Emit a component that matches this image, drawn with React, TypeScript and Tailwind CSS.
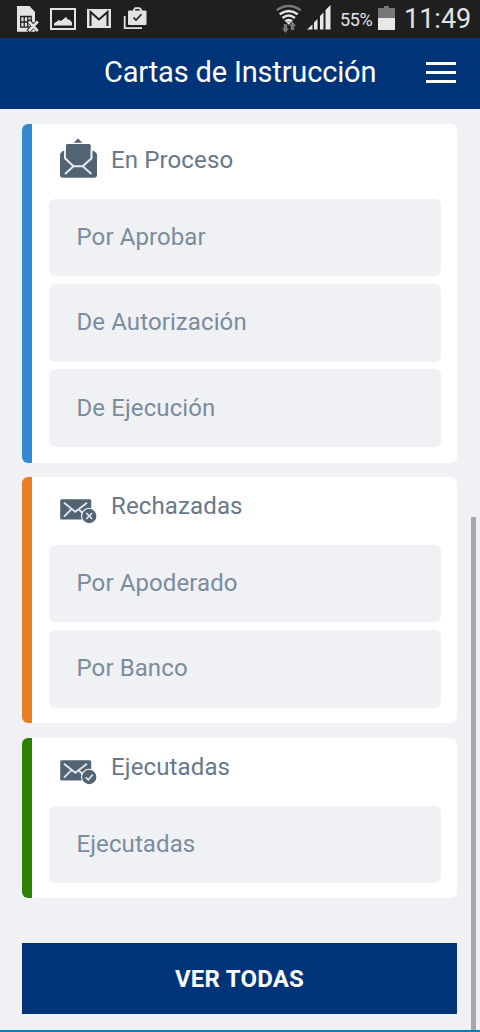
import type { ReactNode } from "react";

function OpenMailIcon() {
  return (
    <svg className="block h-10 w-[38px]" viewBox="0 0 38 40">
      <path d="M13.600 4.800 18 .6l4.400 4.200z" fill="#526374" />
      <path d="M0 17q0-3 4.500-4.500v8L13 28.300h10l9-7.800v-8q5 1.500 5 4.500v19.700q0 3-3 3H3q-3 0-3-3z" fill="#526374" />
      <path d="M6 7.500Q6 6 7.500 6h21.700q1.500 0 1.500 1.500V20L22.500 28h-9L6 20z" fill="#526374" />
      <path d="M5 12v8.300l8.500 8h9.200l8.900-8V12M13.500 28.300 5 36M22.700 28.300 31.500 36" fill="none" stroke="#e8ecef" strokeWidth="1.900" />
    </svg>
  );
}

function MailIcon({ mark }: { mark: "cross" | "check" }) {
  return (
    <svg className="block h-[26px] w-[38px]" viewBox="0 0 38 26">
      <rect x=".2" y=".3" width="31" height="20.300" rx="1.500" fill="#526374" />
      <path d="M4 3.700 15.300 12.800 27 3.700M4 17.700l7.500-7.500M18.500 10.300l5.500 5" fill="none" stroke="#e1e6ea" strokeWidth="1.900" />
      <circle cx="29.200" cy="17" r="8.200" fill="#fff" />
      <circle cx="29.200" cy="17" r="7.200" fill="#526374" />
      <path
        d={mark === "cross" ? "m26.300 14 5.800 6m0-6-5.800 6" : "m25.800 17.300 2.500 2.500 4.500-5.300"}
        fill="none"
        stroke="#e1e6ea"
        strokeWidth="1.700"
      />
    </svg>
  );
}

function StatusBar() {
  return (
    <div className="flex h-[38px] shrink-0 items-start bg-[#1f1f1f] text-[#e3e3e3]">
      <svg className="block h-[38px] w-[160px]" viewBox="0 0 160 38">
        <path d="M17 6h12.500l5.500 6v19.700H17z" fill="#e3e3e3" />
        <path d="M20.700 16.500h10.500v10.700H20.700zM20.500 22h11M24.200 16.500v11M27.800 16.500v11" fill="none" stroke="#1f1f1f" strokeWidth="1.300" />
        <path d="m28 20.500 11 11m0-11-11 11" stroke="#1f1f1f" strokeWidth="4.500" />
        <path d="m28.800 21.500 9 9.500m0-9.500-9 9.500" stroke="#e3e3e3" strokeWidth="2.600" />
        <rect x="51" y="9" width="24" height="20" fill="none" stroke="#e3e3e3" strokeWidth="2" />
        <path d="M54 25.500v-2l5-3.500 2 1 5-4 2.500 3 1-.5 2.500 3v3z" fill="#e3e3e3" />
        <rect x="87" y="9" width="24" height="19" fill="#e3e3e3" />
        <path d="M90.500 26V12L99 19.500l8.500-7.500v14" fill="none" stroke="#1f1f1f" strokeWidth="2" />
        <path d="M124.700 16v12.200H142" fill="none" stroke="#e3e3e3" strokeWidth="1.800" />
        <rect x="128" y="10.500" width="18.500" height="14.500" rx="1" fill="#e3e3e3" />
        <path d="M134 11V9.500l1.300-1.300h4L141 9.500V11" fill="none" stroke="#e3e3e3" strokeWidth="1.800" />
        <path d="m133.500 17.500 2.500 2.600 5.500-5.800" fill="none" stroke="#1f1f1f" strokeWidth="1.600" />
      </svg>
      <svg className="ml-[114px] block h-[38px] w-[60px]" viewBox="0 0 60 38">
        <g fill="none" strokeWidth="2.400">
          <path d="M2.700 10.200q12-8.400 24 0" stroke="#777" />
          <path d="M5.700 14.300q9-6.800 18 0M8.500 18q6.200-5 12.400 0" stroke="#e8e8e8" />
          <path d="M11.300 21.300q3.400-2.800 6.800 0" stroke="#e8e8e8" />
        </g>
        <path d="M12.300 22.300q2.400-1.600 4.800 0l-2.400 2.400z" fill="#e8e8e8" />
        <path d="M9.800 24h3.400v4.500H15l-3.500 4.400L8 28.500h1.800zM16.800 30v-4H15l3.500-4.400L22 26h-1.800v4z" fill="#777" />
        <path d="m33 29.500 5.500-5v5zM40 29.500v-7l3.500-3.500v10.500zM46 29.500V16l3.500-3.500v17zM51.500 29.500V10l5-5v24.500z" fill="#e8e8e8" />
      </svg>
      <span className="ml-[6px] mt-[8px] w-[38px] text-[18px] leading-6 tracking-[-0.4px]">55%</span>
      <svg className="block h-[38px] w-[18px]" viewBox="0 0 18 38">
        <path d="M0 8h6V6h5v2h6v10H0z" fill="#777" />
        <path d="M0 18h17v12H0z" fill="#e8e8e8" />
      </svg>
      <span className="ml-[8px] mt-[3px] whitespace-nowrap text-[27px] leading-8">11:49</span>
    </div>
  );
}

function Card({
  stripe,
  title,
  icon,
  items,
  head,
  size,
}: {
  stripe: string;
  title: string;
  icon: ReactNode;
  items: string[];
  head: string;
  size: string;
}) {
  return (
    <section className={`flex shrink-0 overflow-hidden rounded-[6px] bg-white ${size}`}>
      <div className={`w-[9.500px] shrink-0 ${stripe}`} />
      <div className="flex-1 pl-[17px] pr-4">
        <header className={`flex pl-[11px] ${head}`}>
          <span className="w-[51.500px] shrink-0">{icon}</span>
          <h2 className="text-[24px] leading-7 tracking-[0.130px] text-[#66788a]">{title}</h2>
        </header>
        <ul className="flex flex-col gap-[7.700px]">
          {items.map((item) => (
            <li
              key={item}
              className="flex h-[77.700px] items-center rounded-[6px] bg-[#eff1f5] pb-px pl-[28px] text-[24px] leading-7 tracking-[0.100px] text-[#7b8c9d]"
            >
              {item}
            </li>
          ))}
        </ul>
      </div>
    </section>
  );
}

export default function App() {
  return (
    <div className="relative flex h-[1032px] w-[480px] flex-col overflow-hidden bg-[#eff1f5] font-['Roboto',sans-serif]">
      <StatusBar />
      <div className="flex h-[71px] shrink-0 items-center bg-[#003478] pb-[3px] pl-[104px] text-white">
        <h1 className="w-[322px] whitespace-nowrap text-[29px] leading-9 tracking-[-0.160px]">Cartas de Instrucción</h1>
        <div className="flex w-[30px] flex-col gap-[6px]">
          <span className="h-[3px] bg-white" />
          <span className="h-[3px] bg-white" />
          <span className="h-[3px] bg-white" />
        </div>
      </div>
      <main className="flex flex-col pl-[22px] pr-[23px] pt-[15px]">
        <Card
          stripe="bg-[#3389d0]"
          size="h-[338.500px]"
          head="h-[74.500px] pt-[22px]"
          title="En Proceso"
          icon={<div className="-mt-[8px]"><OpenMailIcon /></div>}
          items={["Por Aprobar", "De Autorización", "De Ejecución"]}
        />
        <div className="h-[14.500px]" />
        <Card
          stripe="bg-[#e78024]"
          size="h-[245.500px]"
          head="h-[67.500px] pt-[15px]"
          title="Rechazadas"
          icon={<div className="pt-[7px]"><MailIcon mark="cross" /></div>}
          items={["Por Apoderado", "Por Banco"]}
        />
        <div className="h-[15.500px]" />
        <Card
          stripe="bg-[#2d8204]"
          size="h-[160px]"
          head="h-[67.500px] pt-[15px]"
          title="Ejecutadas"
          icon={<div className="pt-[7px]"><MailIcon mark="check" /></div>}
          items={["Ejecutadas"]}
        />
        <button className="mt-[45px] h-[70.500px] bg-[#003478] pt-px text-[24px] font-bold leading-7 tracking-[0.200px] text-white">VER TODAS</button>
      </main>
      <div className="absolute left-[471px] top-[517px] h-[513px] w-[5px] bg-[#a6a8aa]" />
      <div className="absolute bottom-0 left-0 h-[2px] w-full bg-[#0080b5]" />
    </div>
  );
}
